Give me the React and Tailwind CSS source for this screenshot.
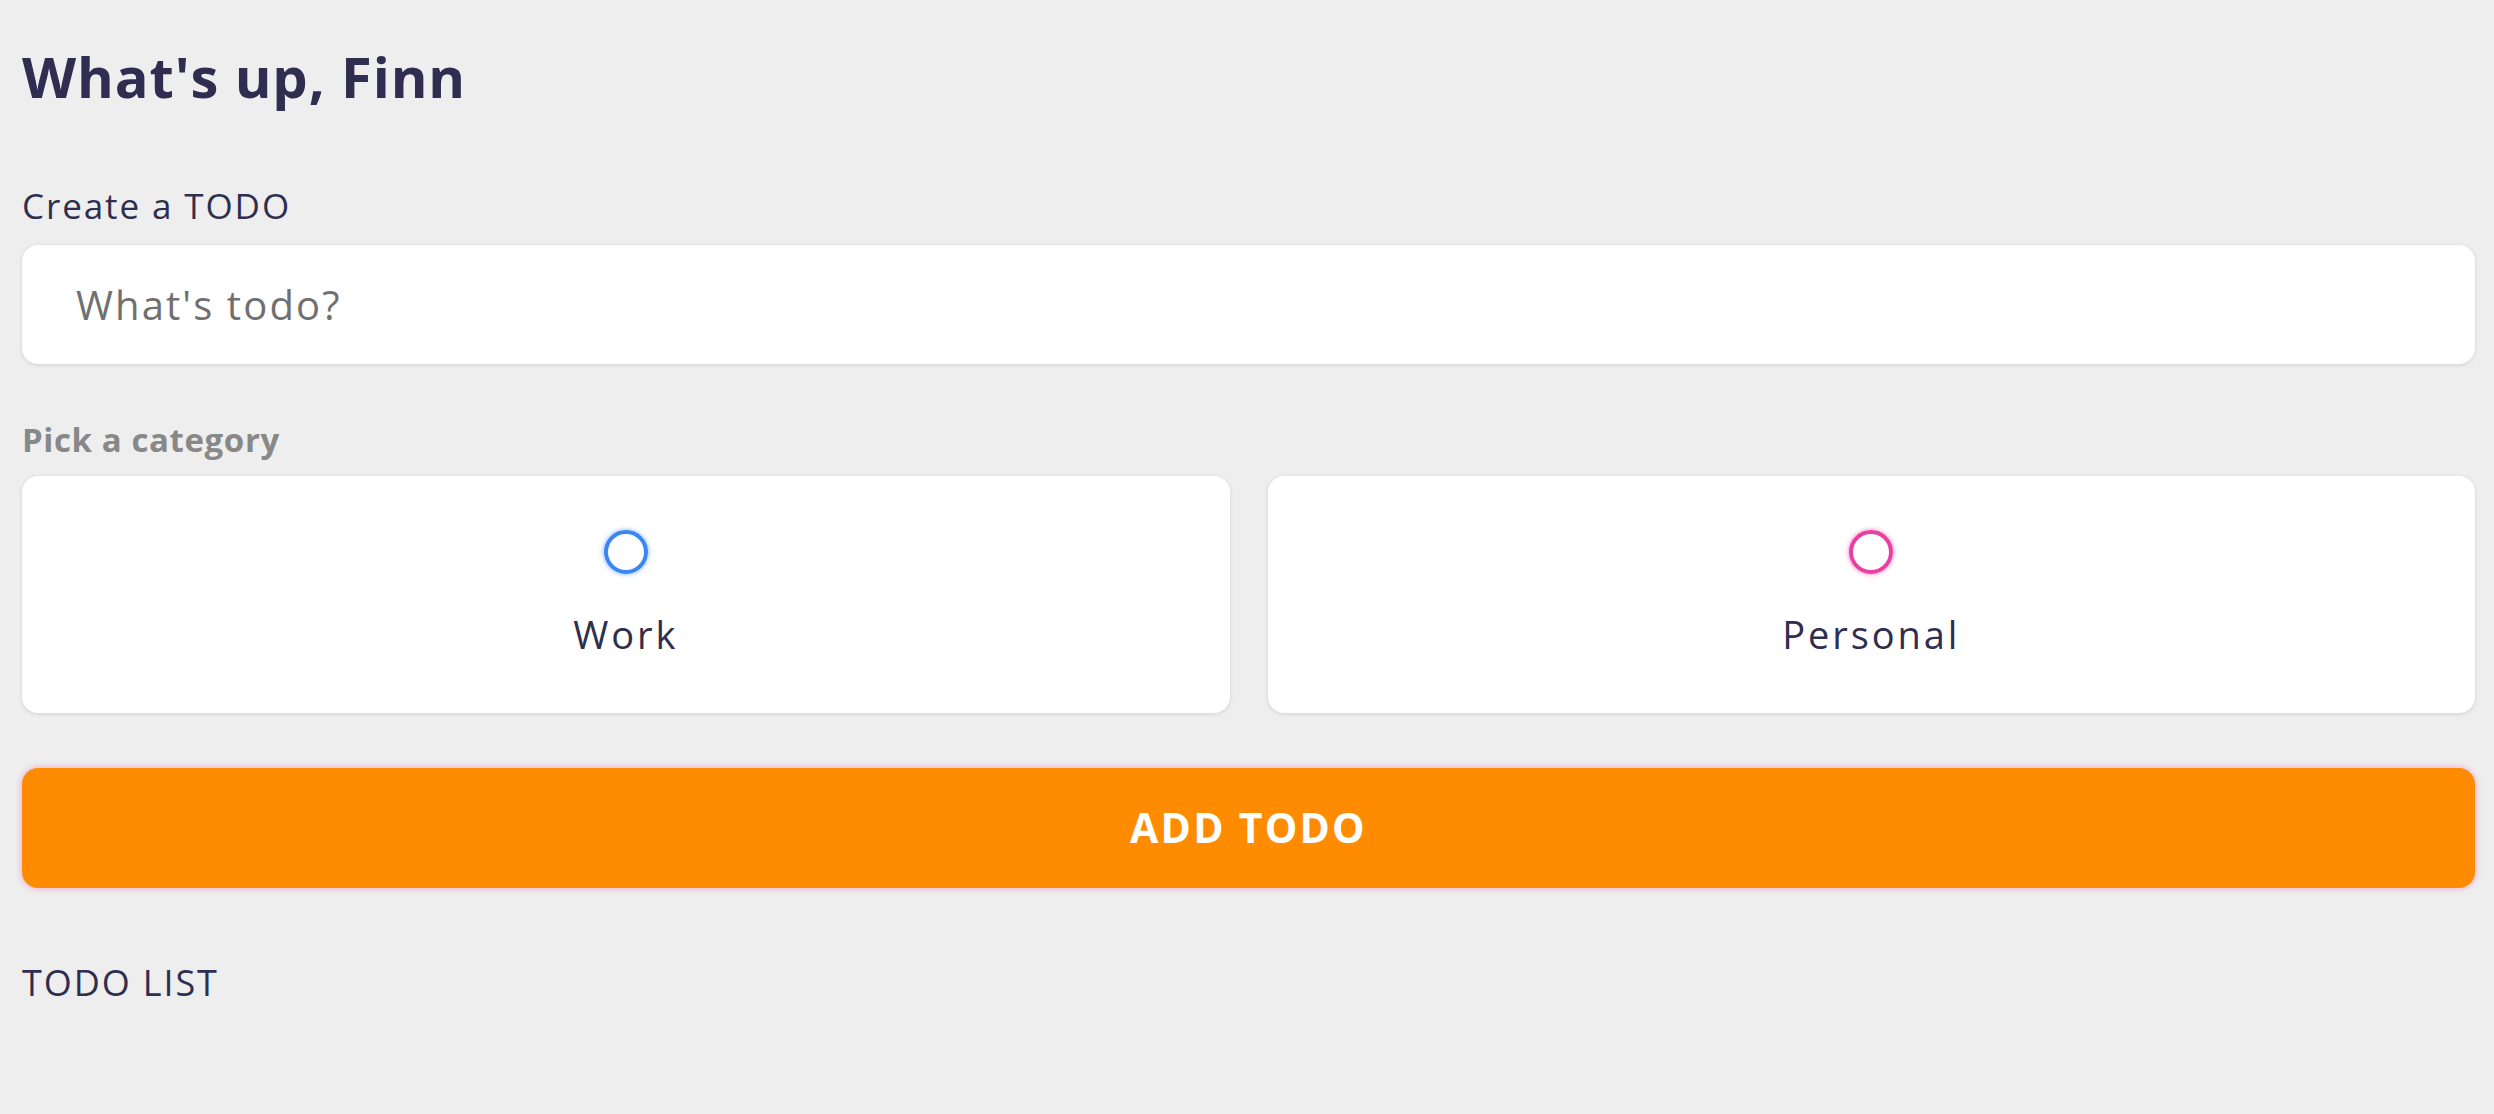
import { useState } from 'react'

const categorias = [
  { id: 'work',     label: 'Work',     ring: 'border-[#3a86f5] shadow-[0_0_5px_rgba(58,134,245,0.7)]' },
  { id: 'personal', label: 'Personal', ring: 'border-[#ea3fa0] shadow-[0_0_5px_rgba(234,63,160,0.7)]' },
]

export default function App() {
  const [texto, setTexto] = useState('')
  const [categoria, setCategoria] = useState(null)

  return (
    <div className="min-h-screen overflow-hidden bg-[#eeeeee] pl-[22px] pr-[19px] pt-[48px] text-[#2f2e50] font-['Open_Sans',sans-serif]">
      <h1 className="text-[56px] leading-[56px] font-bold tracking-[0.9px]">What's up, Finn</h1>

      {/* Crear */}
      <p className="mt-[84px] text-[35px] leading-[35px] font-normal tracking-[1.9px]">Create a TODO</p>
      <input
        value={texto}
        onChange={e => setTexto(e.target.value)}
        placeholder="What's todo?"
        className="mt-[22px] w-full h-[119px] bg-white rounded-2xl px-[54px] text-[40px] font-normal tracking-[2.1px] text-[#2f2e50] placeholder:text-[#707070] shadow-[0_1px_4px_rgba(0,0,0,0.12)] outline-none"
      />

      {/* Categoría */}
      <p className="mt-[59px] text-[33px] leading-[33px] font-bold tracking-[0.6px] text-[#888888]">Pick a category</p>
      <div className="mt-[20px] grid grid-cols-2 gap-[38px]">
        {categorias.map(c => (
          <button
            key={c.id}
            onClick={() => setCategoria(c.id)}
            className="h-[237px] bg-white rounded-2xl shadow-[0_1px_4px_rgba(0,0,0,0.12)] flex flex-col items-center pt-[54px]"
          >
            <span className={`w-[44px] h-[44px] rounded-full border-4 ${c.ring} ${categoria === c.id ? 'bg-current' : ''}`} />
            <span className="mt-[41px] text-[38px] leading-[38px] font-normal tracking-[2.9px]">{c.label}</span>
          </button>
        ))}
      </div>

      <button className="mt-[55px] w-full h-[120px] bg-[#ff8c00] rounded-2xl text-white text-[41px] font-bold tracking-[2.25px] shadow-[0_0_6px_rgba(234,63,160,0.45)]">
        ADD TODO
      </button>

      {/* Lista */}
      <p className="mt-[77px] text-[36px] leading-[36px] font-normal tracking-[1.9px]">TODO LIST</p>
    </div>
  )
}
